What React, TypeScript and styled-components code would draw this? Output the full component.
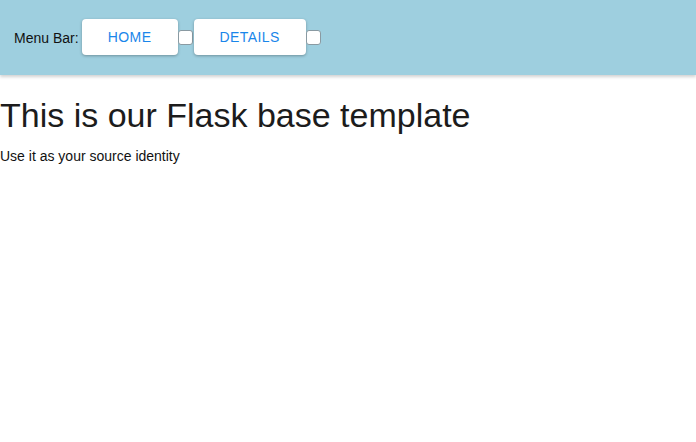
import React from "react";
import styled, { createGlobalStyle } from "styled-components";

const Global = createGlobalStyle`
  html, body { margin: 0; padding: 0; background: #ffffff; }
  body { font-family: "Liberation Sans", Arial, sans-serif; color: #1c1c1c; }
`;

const Header = styled.header`
  display: flex;
  align-items: center;
  height: 75px;
  padding: 0 14px;
  background: #9ecfdf;
  box-shadow: 0 2px 3px rgba(0, 0, 0, 0.18);
  box-sizing: border-box;
`;

const Label = styled.span`
  font-size: 14px;
  color: #111;
  margin-right: 3px;
`;

const NavButton = styled.button<{ $w: number }>`
  width: ${(p) => p.$w}px;
  height: 36px;
  margin-top: -1px;
  border: none;
  border-radius: 4px;
  background: #ffffff;
  color: #1a86ea;
  font-family: "Liberation Sans", Arial, sans-serif;
  font-size: 14px;
  letter-spacing: 0.4px;
  text-transform: uppercase;
  box-shadow: 0 1px 3px rgba(0, 0, 0, 0.3);
  cursor: pointer;
  padding: 0;
`;

const Box = styled.span`
  display: inline-block;
  width: 13px;
  height: 13px;
  border: 1px solid #8a9aa2;
  border-radius: 3px;
  background: #fff;
  margin: 0 1px 0 0;
`;

const Title = styled.h1`
  margin: 21px 0 0;
  font-size: 34px;
  font-weight: normal;
  line-height: 39px;
  color: #1c1c1c;
`;

const Text = styled.p`
  margin: 13px 0 0;
  font-size: 14px;
  line-height: 16px;
  color: #111;
`;

export default function App() {
  return (
    <>
      <Global />
      <Header>
        <Label>Menu Bar:</Label>
        <NavButton $w={96}>Home</NavButton>
        <Box />
        <NavButton $w={112}>Details</NavButton>
        <Box />
      </Header>
      <Title>This is our Flask base template</Title>
      <Text>Use it as your source identity</Text>
    </>
  );
}
